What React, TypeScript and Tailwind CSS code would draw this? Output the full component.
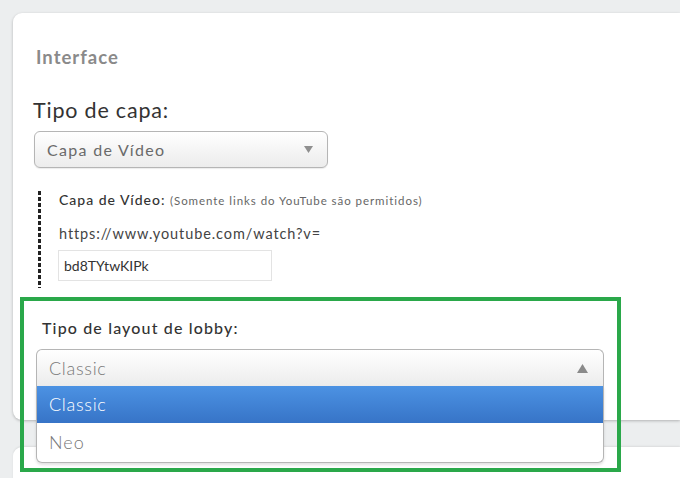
import React from "react";

function TriDown() {
  return (
    <svg width="9" height="7" viewBox="0 0 9 7">
      <path d="M0 0 H9 L4.5 7 Z" fill="#8f8f8f" />
    </svg>
  );
}
function TriUp() {
  return (
    <svg width="11" height="9" viewBox="0 0 11 9">
      <path d="M0 9 H11 L5.5 0 Z" fill="#8a8a8a" />
    </svg>
  );
}

export default function App() {
  return (
    <div
      className="relative w-[680px] h-[478px] overflow-hidden bg-[#eceeef] pt-[13px] pl-[13px]"
      style={{ fontFamily: "Lato, 'Open Sans', sans-serif" }}
    >
      {/* main card */}
      <div className="relative h-[407px] bg-white rounded-tl-[9px] rounded-bl-[9px] shadow-[0_1px_3px_rgba(0,0,0,0.25)] flex flex-col">
        <div className="ml-[23px] mt-[33px] text-[18.5px] leading-[22px] font-bold tracking-[1px] text-[#8a8a8a]">
          Interface
        </div>
        <div className="ml-[20px] mt-[29px] text-[21.5px] leading-[26px] tracking-[0.8px] text-[#333]">
          Tipo de capa:
        </div>
        <div className="ml-[21px] mt-[8px] w-[294px] h-[37px] rounded-[6px] border border-[#b5b5b5] bg-gradient-to-b from-white to-[#ececec] flex items-center justify-between pl-[12px] pr-[14px] shadow-[0_1px_1px_rgba(0,0,0,0.08)]">
          <span className="text-[16px] tracking-[1.3px] text-[#6a6a6a]">Capa de Vídeo</span>
          <TriDown />
        </div>

        <div className="ml-[25px] mt-[23px] flex">
          <div className="w-[3px] h-[97px] bg-[repeating-linear-gradient(to_bottom,#222_0px,#222_4px,transparent_4px,transparent_6px)]" />
          <div className="ml-[18px] flex flex-col">
            <div className="leading-[16px] text-[#333] whitespace-nowrap">
              <span className="text-[14px] font-medium tracking-[1px]">Capa de Vídeo: </span>
              <span className="text-[11.5px] tracking-[0.95px] text-[#666]">(Somente links do YouTube são permitidos)</span>
            </div>
            <div className="mt-[16px] text-[14.5px] leading-[18px] tracking-[0.9px] text-[#444]">
              https://www.youtube.com/watch?v=
            </div>
            <div className="mt-[7px] -ml-[1px] w-[214px] h-[31px] border border-[#e3e3e3] flex items-center pl-[5px] text-[14px] text-[#333]">
              bd8TYtwKIPk
            </div>
          </div>
        </div>

        <div className="ml-[29px] mt-[30px] text-[16px] leading-[20px] tracking-[1.15px] text-[#333] font-medium">
          Tipo de layout de lobby:
        </div>
        <div className="relative ml-[23px] mt-[11px] w-[568px]">
          <div className="h-[37px] rounded-t-[6px] border border-b-0 border-[#b5b5b5] bg-gradient-to-b from-white to-[#ececec] flex items-center justify-between pl-[12px] pr-[15px]">
            <span className="text-[18px] font-light tracking-[0.7px] text-[#777]">Classic</span>
            <TriUp />
          </div>
          <div className="absolute left-0 top-[37px] w-full z-10 bg-white border border-t-0 border-[#b5b5b5] rounded-b-[6px] shadow-[0_2px_3px_rgba(0,0,0,0.12)]">
            <div className="h-[37px] bg-gradient-to-b from-[#4c92e3] to-[#3774c7] flex items-center pl-[12px] text-[18px] font-light tracking-[0.7px] text-white">
              Classic
            </div>
            <div className="h-[39px] flex items-center pl-[12px] text-[18px] font-light tracking-[1px] text-[#777]">
              Neo
            </div>
          </div>
        </div>
      </div>

      {/* next card */}
      <div className="mt-[27px] h-[40px] bg-white rounded-tl-[9px] shadow-[0_-1px_2px_rgba(0,0,0,0.08)]" />

      {/* highlight annotation */}
      <div className="absolute left-[20px] top-[297px] w-[601px] h-[175px] border-[4px] border-[#2aa84a] z-20 pointer-events-none" />
    </div>
  );
}
